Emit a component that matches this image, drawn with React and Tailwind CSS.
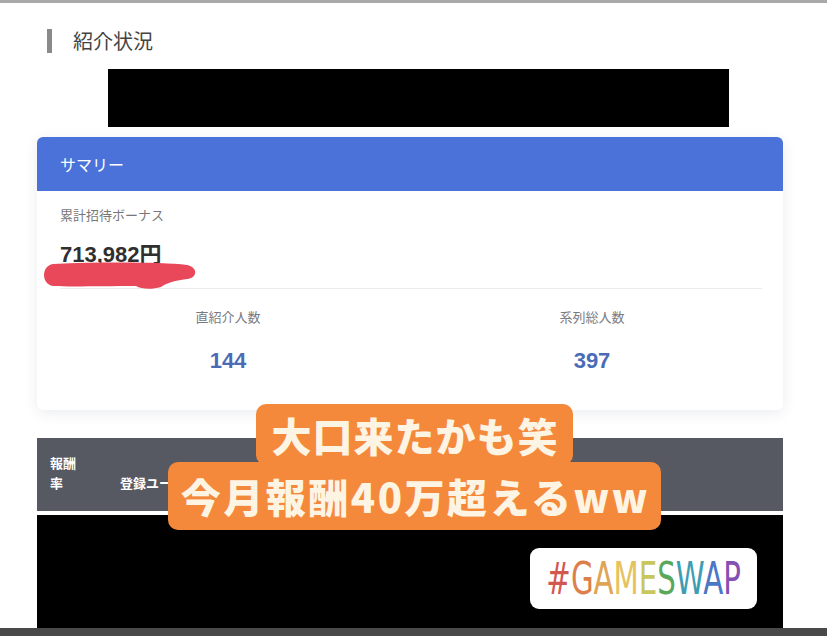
const jp = { fontFamily: '"Noto Sans CJK JP", "Liberation Sans", sans-serif' };
const num = { fontFamily: '"Liberation Sans", "Noto Sans CJK JP", sans-serif' };
const thin = { fontFamily: '"DejaVu Sans", "Liberation Sans", sans-serif' };

const tagColors = ['#d4574f', '#dc7f4c', '#e0a456', '#e6c25e', '#c9c65b', '#5aa85a', '#3d9db3', '#4a77c6', '#8550b3'];

function Scribble() {
  return (
    <svg className="absolute left-[4px] top-[125px]" width="158" height="30" viewBox="0 0 158 30">
      <path
        d="M12 2 C 60 0, 120 0, 146 3 C 157 5, 157 16, 146 17 C 132 19, 126 21, 120 25 C 110 28, 100 27, 95 24 C 60 24, 30 25, 12 24 C 0 22, 0 4, 12 2 Z"
        fill="#e9475a"
      />
    </svg>
  );
}

export default function App() {
  return (
    <div className="relative flex h-[636px] w-[827px] flex-col overflow-hidden border-t-[3px] border-[#a9a9a9] bg-white" style={jp}>
      <div className="ml-[47px] mt-[26px] flex h-[24px] items-center">
        <span className="h-[24px] w-[5px] bg-[#8a8a8a]" />
        <h1 className="ml-[21px] text-[20px] leading-[24px] text-[#444]">紹介状況</h1>
      </div>

      <div className="ml-[108px] mt-[16px] h-[58px] w-[621px] bg-black" />

      <section className="relative ml-[37px] mt-[10px] h-[273px] w-[746px] rounded-[6px] bg-white shadow-[0_3px_14px_rgba(30,40,80,0.09)]">
        <div className="flex h-[54px] items-center rounded-t-[6px] bg-[#4a72d9] px-[23px] text-[16px] text-white">サマリー</div>
        <div className="px-[23px] pt-[14px]">
          <p className="text-[13px] leading-[20px] text-[#777]">累計招待ボーナス</p>
          <p className="mt-[13px] text-[22px] font-semibold leading-[28px] text-[#2f2f2f]" style={num}>713,982<span style={jp}>円</span></p>
          <div className="mr-[-2px] mt-[19px] h-px bg-[#ececec]" />
        </div>
        <Scribble />
        <div className="mx-[9px] grid grid-cols-2 pt-[18px] text-center">
          <div>
            <p className="text-[13px] leading-[20px] text-[#7a7a80]">直紹介人数</p>
            <p className="mt-[20px] text-[22px] font-bold leading-[28px] text-[#4a6cb6]" style={num}>144</p>
          </div>
          <div>
            <p className="text-[13px] leading-[20px] text-[#7a7a80]">系列総人数</p>
            <p className="mt-[20px] text-[22px] font-bold leading-[28px] text-[#4a6cb6]" style={num}>397</p>
          </div>
        </div>
      </section>

      <div className="ml-[37px] mt-[28px] w-[746px]">
        <div className="flex h-[73px] bg-[#565862] pl-[13px] pt-[15px] text-[13px] font-bold leading-[20px] text-white">
          <div>報酬<br />率</div>
          <div className="ml-[44px] mt-[20px]">登録ユー</div>
        </div>
        <div className="mt-[4px] h-[113px] bg-black" />
      </div>

      <div className="mt-auto h-[8px] bg-[#494949]" />

      <div className="absolute left-[256px] top-[401px] flex h-[61px] w-[317px] items-center justify-center rounded-[10px] bg-[#f4893b] pl-[1px] text-[40px] font-black tracking-[1px] text-[#fdf4e4]">
        大口来たかも笑
      </div>
      <div className="absolute left-[168px] top-[459px] flex h-[68px] w-[493px] items-center justify-center rounded-[10px] bg-[#f4893b] pl-[2px] text-[40px] font-black tracking-[2.5px] text-[#fdf4e4]">
        今月報酬40万超えるww
      </div>

      <div className="absolute left-[530px] top-[545px] flex h-[61px] w-[227px] items-center justify-center rounded-[9px] bg-white">
        <span className="inline-block origin-center scale-x-[0.65] text-[45px] leading-none" style={thin}>
          {'#GAMESWAP'.split('').map((c, i) => (
            <span key={i} style={{ color: tagColors[i] }}>{c}</span>
          ))}
        </span>
      </div>
    </div>
  );
}
